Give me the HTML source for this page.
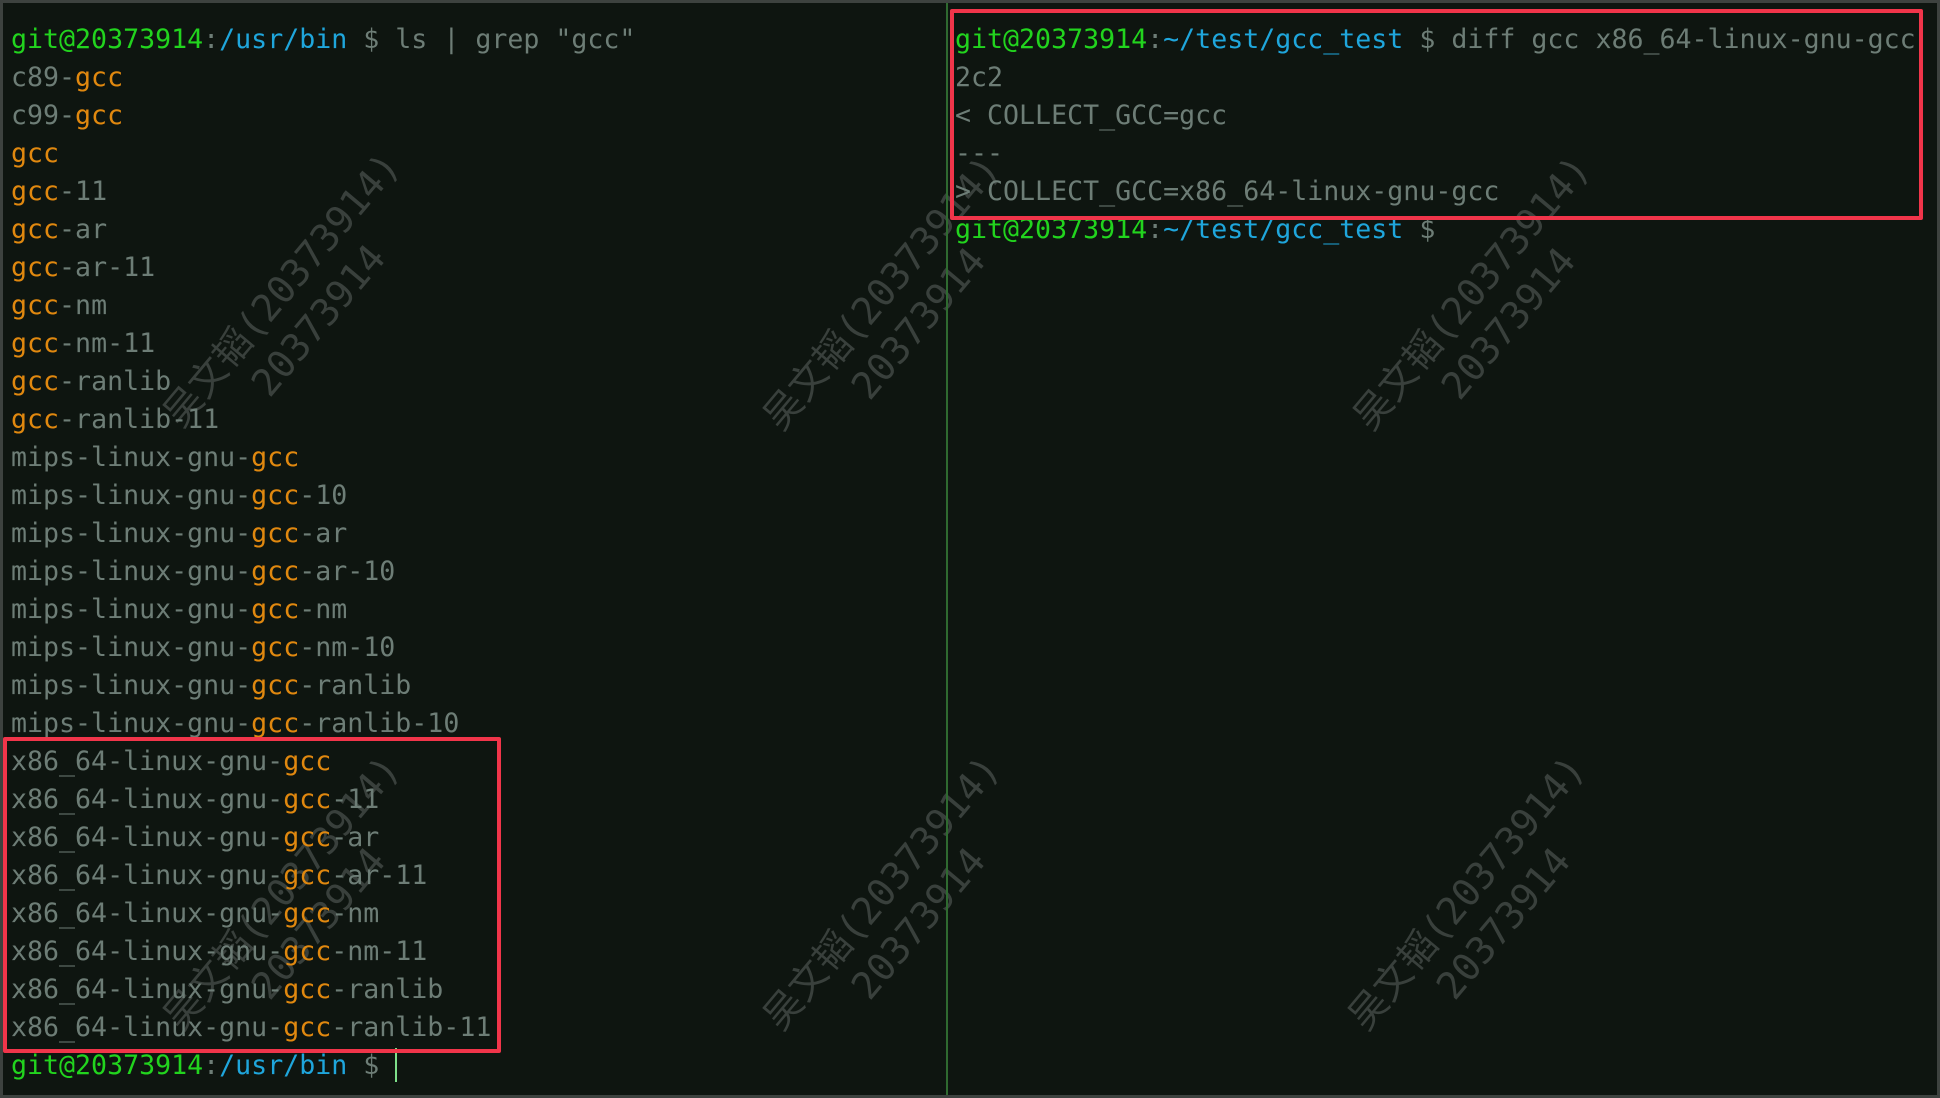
<!DOCTYPE html>
<html><head><meta charset="utf-8"><style>
html,body{margin:0;padding:0;width:1940px;height:1098px;overflow:hidden;background:#0e1510;}
#w{position:absolute;left:0;top:0;width:1940px;height:1098px;overflow:hidden;background:#0e1510;font-family:"DejaVu Sans Mono","Liberation Mono",monospace;}
.frame{position:absolute;left:0;top:0;width:1934px;height:1092px;border:3px solid #3d423f;}
.pane{position:absolute;top:21px;font-size:26.6px;line-height:38px;white-space:pre;color:#6d7d76;}
.g{color:#22d41e}.b{color:#1fa6dc}.o{color:#e0880f}
.div{position:absolute;left:946px;top:3px;width:2px;height:1092px;background:#2f6a30;}
.box{position:absolute;border:4px solid #f0354a;border-radius:2px;}
.wm{position:absolute;width:460px;margin-left:-230px;margin-top:-48px;text-align:center;font-family:"DejaVu Sans Mono","Noto Sans CJK SC",monospace;font-size:38px;line-height:48px;color:#39403c;transform:rotate(-50deg);white-space:nowrap;}
.cur{position:absolute;left:395px;top:1048px;width:2px;height:34px;background:#7ee08a;}
</style></head><body><div id="w">
<div class="wm" style="left:300px;top:305px">吴文韬(20373914)<br>20373914</div>
<div class="wm" style="left:900px;top:308px">吴文韬(20373914)<br>20373914</div>
<div class="wm" style="left:1490px;top:308px">吴文韬(20373914)<br>20373914</div>
<div class="wm" style="left:300px;top:908px">吴文韬(20373914)<br>20373914</div>
<div class="wm" style="left:900px;top:908px">吴文韬(20373914)<br>20373914</div>
<div class="wm" style="left:1485px;top:908px">吴文韬(20373914)<br>20373914</div>
<div class="div"></div>
<div class="pane" style="left:11px"><span class="g">git@20373914</span>:<span class="b">/usr/bin</span> $ ls | grep "gcc"
c89-<span class="o">gcc</span>
c99-<span class="o">gcc</span>
<span class="o">gcc</span>
<span class="o">gcc</span>-11
<span class="o">gcc</span>-ar
<span class="o">gcc</span>-ar-11
<span class="o">gcc</span>-nm
<span class="o">gcc</span>-nm-11
<span class="o">gcc</span>-ranlib
<span class="o">gcc</span>-ranlib-11
mips-linux-gnu-<span class="o">gcc</span>
mips-linux-gnu-<span class="o">gcc</span>-10
mips-linux-gnu-<span class="o">gcc</span>-ar
mips-linux-gnu-<span class="o">gcc</span>-ar-10
mips-linux-gnu-<span class="o">gcc</span>-nm
mips-linux-gnu-<span class="o">gcc</span>-nm-10
mips-linux-gnu-<span class="o">gcc</span>-ranlib
mips-linux-gnu-<span class="o">gcc</span>-ranlib-10
x86_64-linux-gnu-<span class="o">gcc</span>
x86_64-linux-gnu-<span class="o">gcc</span>-11
x86_64-linux-gnu-<span class="o">gcc</span>-ar
x86_64-linux-gnu-<span class="o">gcc</span>-ar-11
x86_64-linux-gnu-<span class="o">gcc</span>-nm
x86_64-linux-gnu-<span class="o">gcc</span>-nm-11
x86_64-linux-gnu-<span class="o">gcc</span>-ranlib
x86_64-linux-gnu-<span class="o">gcc</span>-ranlib-11
<span class="g">git@20373914</span>:<span class="b">/usr/bin</span> $ </div>
<div class="cur"></div>
<div class="pane" style="left:955px"><span class="g">git@20373914</span>:<span class="b">~/test/gcc_test</span> $ diff gcc x86_64-linux-gnu-gcc
2c2
&lt; COLLECT_GCC=gcc
---
&gt; COLLECT_GCC=x86_64-linux-gnu-gcc
<span class="g">git@20373914</span>:<span class="b">~/test/gcc_test</span> $ </div>
<div class="box" style="left:3px;top:737px;width:490px;height:308px"></div>
<div class="box" style="left:950px;top:9px;width:965px;height:203px"></div>
<div class="frame"></div>
</div></body></html>
